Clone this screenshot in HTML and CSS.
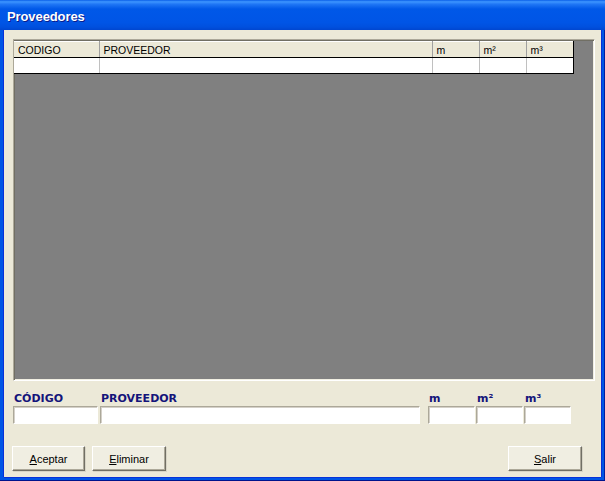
FILE: index.html
```html
<!DOCTYPE html>
<html lang="es">
<head>
<meta charset="utf-8">
<title>Proveedores</title>
<link rel="stylesheet" href="styles.css">
</head>
<body>
<div class="window">
  <div class="titlebar"><span class="title">Proveedores</span></div>
  <div class="client">
    <div class="grid">
      <table class="gridtable">
        <colgroup>
          <col class="c-cod"><col class="c-prov"><col class="c-m"><col class="c-m"><col class="c-m">
        </colgroup>
        <thead>
          <tr><th>CODIGO</th><th>PROVEEDOR</th><th>m</th><th>m²</th><th>m³</th></tr>
        </thead>
        <tbody>
          <tr><td></td><td></td><td></td><td></td><td></td></tr>
        </tbody>
      </table>
    </div>
    <div class="fields">
      <div class="field f-cod"><label class="lbl">CÓDIGO</label><div class="input"></div></div>
      <div class="field f-prov"><label class="lbl">PROVEEDOR</label><div class="input"></div></div>
      <div class="field f-m"><label class="lbl">m</label><div class="input"></div></div>
      <div class="field f-m"><label class="lbl">m²</label><div class="input"></div></div>
      <div class="field f-m"><label class="lbl">m³</label><div class="input"></div></div>
    </div>
    <div class="buttons">
      <button class="btn btn-a"><u>A</u>ceptar</button>
      <button class="btn btn-e"><u>E</u>liminar</button>
      <span class="spacer"></span>
      <button class="btn btn-s"><u>S</u>alir</button>
    </div>
  </div>
</div>
</body>
</html>
```

FILE: styles.css
```css
* { box-sizing: border-box; }
html, body { margin: 0; padding: 0; background: #0055e5; }
.window {
  width: 605px;
  height: 481px;
  display: flex;
  flex-direction: column;
  background: #0055e5;
  box-shadow: inset 0 -1px 0 #00138c, inset -1px 0 0 #001ea0;
}
.titlebar {
  height: 30px;
  flex: 0 0 30px;
  background: linear-gradient(180deg, #0a5fe8 0%, #3d95ff 6%, #1f76f5 14%, #0058e8 30%, #0055e6 75%, #0050de 90%, #0046d0 100%);
  padding-left: 7px;
  display: flex;
  align-items: center;
  padding-top: 2px;
}
.title {
  font-family: "Liberation Sans", Arial, sans-serif;
  font-weight: bold;
  font-size: 13px;
  color: #fff;
  text-shadow: 1px 1px 0 #0a1d8c;
  letter-spacing: -0.1px;
}
.client {
  flex: 1;
  margin: 0 4px 4px 4px;
  background: #ece9d8;
  padding: 9px 6px 5px 9px;
  display: flex;
  flex-direction: column;
  box-shadow: -1px 0 0 #0831d9, 1px 0 0 #0831d9, 0 1px 0 #0831d9;
}
.grid {
  height: 342px;
  flex: 0 0 342px;
  background: #808080;
  border: 1px solid;
  border-color: #aca899 #fff #fff #aca899;
  box-shadow: inset 1px 1px 0 #716f64, inset -1px -1px 0 #f1efe2;
  padding: 1px 0 0 0;
}
.gridtable {
  border-collapse: collapse;
  table-layout: fixed;
  width: 559px;
  font-family: "Liberation Sans", Arial, sans-serif;
  font-size: 10.5px;
  color: #000;
}
.c-cod { width: 85px; }
.c-prov { width: 333px; }
.c-m { width: 47px; }
.gridtable th {
  height: 16px;
  background: #ece9d8;
  font-weight: normal;
  text-align: left;
  padding: 1px 0 0 4px;
  border-right: 1px solid #a0a0a0;
  border-bottom: 1px solid #000;
  border-top: 1px solid #fff;
  line-height: 14px;
  white-space: nowrap;
}
.gridtable td {
  height: 16px;
  background: #fff;
  border-right: 1px solid #c0c0c0;
  border-bottom: 1px solid #000;
  padding: 0;
}
.gridtable th:last-child, .gridtable td:last-child { border-right: 1px solid #000; }
.fields {
  display: flex;
  margin-top: 11px;
  align-items: flex-end;
}
.field { display: flex; flex-direction: column; }
.lbl {
  font-family: "DejaVu Sans", Verdana, sans-serif;
  font-weight: bold;
  font-size: 11px;
  line-height: 14px;
  color: #14147a;
  padding-left: 1px;
  white-space: nowrap;
}
.input {
  height: 18px;
  background: #fff;
  border: 1px solid;
  border-color: #aca899 #fff #fff #aca899;
  box-shadow: inset 1px 1px 0 #d4d0c8;
}
.f-cod { width: 85px; margin-right: 2px; }
.f-prov { width: 320px; margin-right: 8px; }
.f-m { width: 47px; margin-right: 1px; }
.buttons {
  display: flex;
  margin-top: 22px;
  margin-left: -1px;
  margin-right: 13px;
}
.spacer { flex: 1; }
.btn {
  height: 25px;
  width: 74px;
  background: #f0eee2;
  border: 1px solid;
  border-color: #fff #716f64 #716f64 #fff;
  box-shadow: inset -1px -1px 0 #aca899, 1px 1px 0 #d8d5c6;
  font-family: "Liberation Sans", Arial, sans-serif;
  font-size: 11px;
  color: #000;
  padding: 0;
  margin: 0;
  border-radius: 0;
}
.btn-a { width: 73px; margin-right: 7px; }
.btn u { text-decoration: underline; text-underline-offset: 1px; }
```
